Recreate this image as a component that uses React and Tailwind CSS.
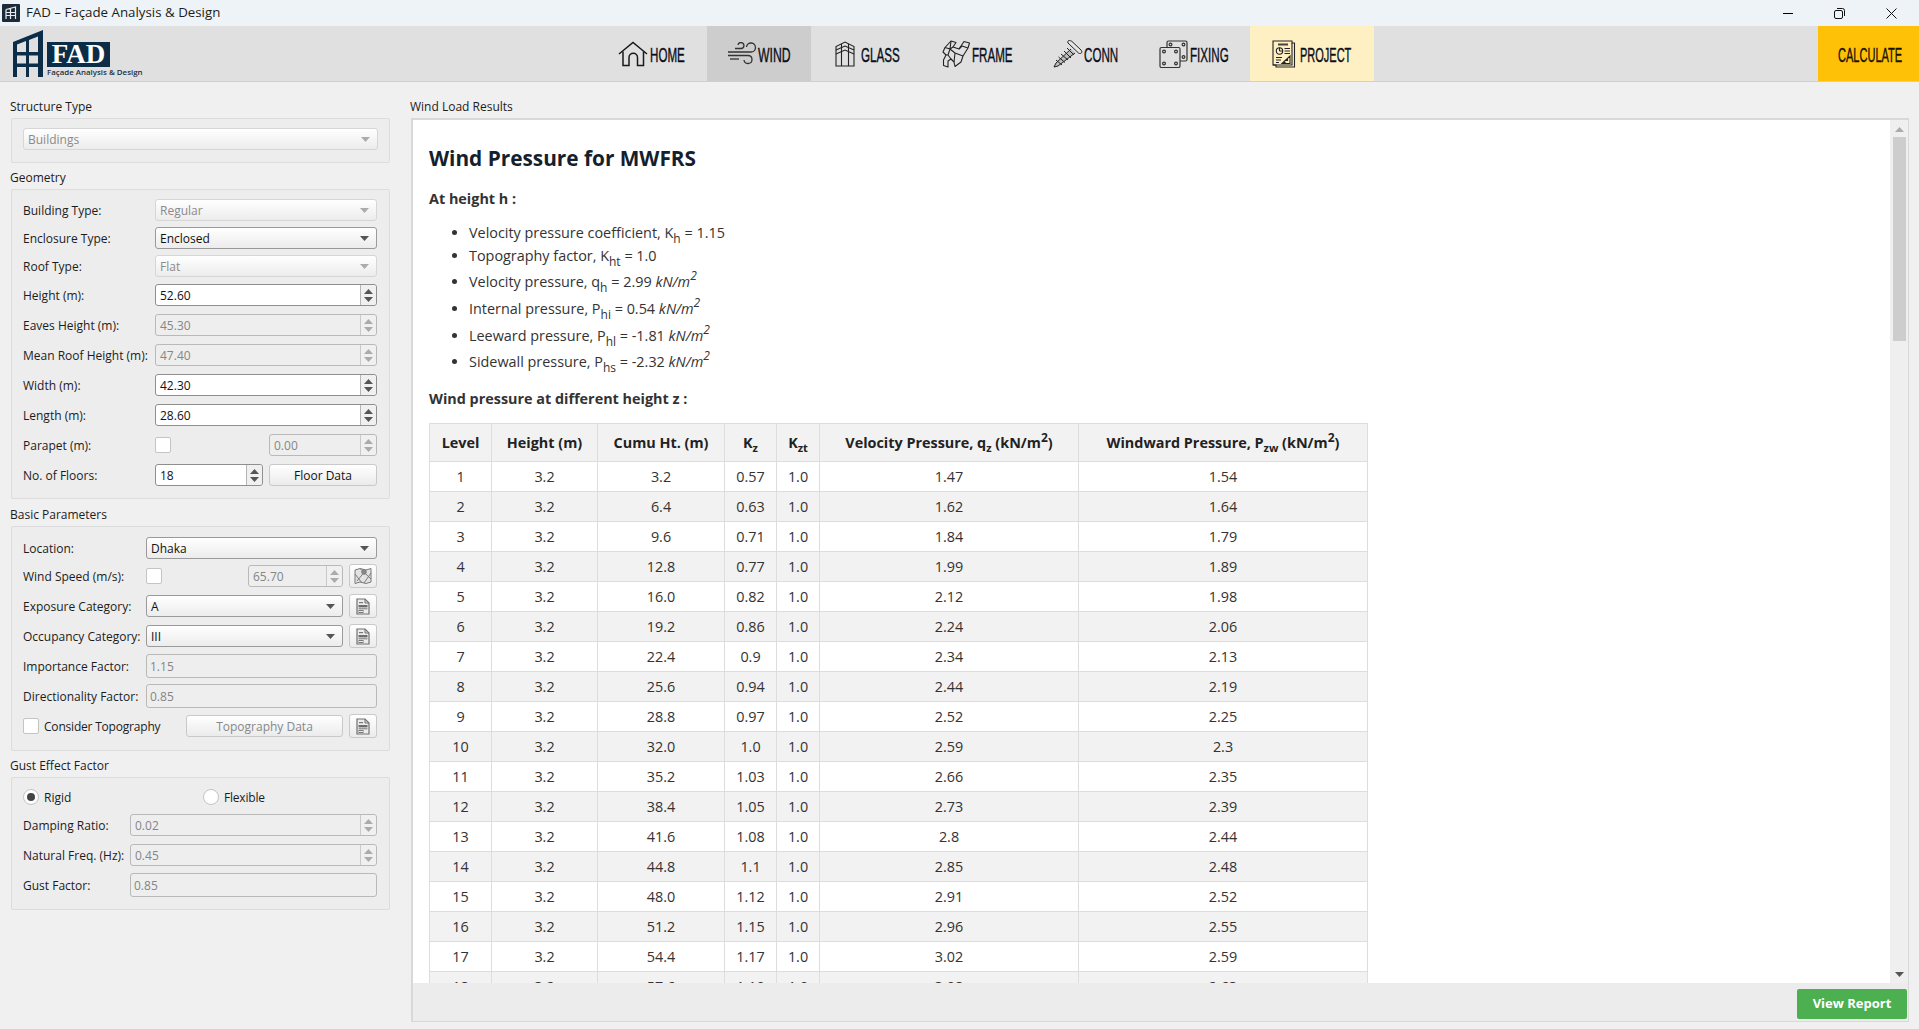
import React from 'react';

const rows = [
  [1, '3.2', '0.57', '1.47', '1.54'],
  [2, '6.4', '0.63', '1.62', '1.64'],
  [3, '9.6', '0.71', '1.84', '1.79'],
  [4, '12.8', '0.77', '1.99', '1.89'],
  [5, '16.0', '0.82', '2.12', '1.98'],
  [6, '19.2', '0.86', '2.24', '2.06'],
  [7, '22.4', '0.9', '2.34', '2.13'],
  [8, '25.6', '0.94', '2.44', '2.19'],
  [9, '28.8', '0.97', '2.52', '2.25'],
  [10, '32.0', '1.0', '2.59', '2.3'],
  [11, '35.2', '1.03', '2.66', '2.35'],
  [12, '38.4', '1.05', '2.73', '2.39'],
  [13, '41.6', '1.08', '2.8', '2.44'],
  [14, '44.8', '1.1', '2.85', '2.48'],
  [15, '48.0', '1.12', '2.91', '2.52'],
  [16, '51.2', '1.15', '2.96', '2.55'],
  [17, '54.4', '1.17', '3.02', '2.59'],
  [18, '57.6', '1.19', '3.08', '2.63'],
];

function Tri({ up, off, className = '' }) {
  return (
    <svg width="9" height="5" viewBox="0 0 9 5" className={className}>
      <path d={up ? 'M4.5 0 L9 5 H0 Z' : 'M0 0 H9 L4.5 5 Z'} fill={off ? '#ababab' : '#555555'} />
    </svg>
  );
}

function Combo({ value, off, className = '' }) {
  return (
    <div className={`h-[22px] flex items-center justify-between pl-[4px] pr-[7px] rounded-[3px] border bg-gradient-to-b from-white to-[#ececec] text-[12px] ${off ? 'border-[#d6d6d6] text-[#8a8a8a]' : 'border-[#9a9a9a] text-[#111]'} ${className}`}>
      <span className="pt-[2px]">{value}</span>
      <Tri off={off} />
    </div>
  );
}

function Spin({ value, off, className = '' }) {
  return (
    <div className={`h-[22px] flex rounded-[3px] border text-[12px] ${off ? 'border-[#b9b9b9] bg-[#eeeeee] text-[#858585]' : 'border-[#8f8f8f] bg-white text-[#111]'} ${className}`}>
      <span className="flex-1 pl-[4px] leading-[22px]">{value}</span>
      <div className={`w-[16px] flex flex-col items-center justify-center gap-[3px] border-l bg-[#f0f0f0] rounded-r-[3px] ${off ? 'border-[#c9c9c9]' : 'border-[#b5b5b5]'}`}>
        <Tri up off={off} />
        <Tri off={off} />
      </div>
    </div>
  );
}

function Field({ value, className = '' }) {
  return (
    <div className={`h-[24px] pl-[3px] leading-[24px] rounded-[3px] border border-[#b9b9b9] bg-[#eeeeee] text-[12px] text-[#858585] ${className}`}>
      {value}
    </div>
  );
}

function Check({ className = '' }) {
  return <div className={`w-[16px] h-[16px] bg-white border border-[#c4c4c4] rounded-[2px] ${className}`} />;
}

function Btn({ children, off, className = '' }) {
  return (
    <div className={`flex items-center justify-center rounded-[3px] border border-[#c9c9c9] bg-gradient-to-b from-white to-[#ebebeb] text-[12px] ${off ? 'text-[#888]' : 'text-[#111]'} ${className}`}>
      {children}
    </div>
  );
}

function DocIcon() {
  return (
    <svg width="14" height="17" viewBox="0 0 14 17" fill="none">
      <path d="M1 1 H9 L13 5 V16 H1 Z" fill="#ececec" stroke="#707070" strokeWidth="1.2" />
      <path d="M9 1 V5 H13" stroke="#707070" strokeWidth="1" />
      <rect x="3" y="4" width="4" height="1.2" fill="#777" />
      <rect x="2.5" y="7" width="9" height="2.4" fill="#6e6e6e" />
      <rect x="2.5" y="10" width="9" height="1.4" fill="#999" />
      <rect x="3" y="12.5" width="4" height="2" fill="none" stroke="#777" />
    </svg>
  );
}

function MapIcon() {
  return (
    <svg width="18" height="18" viewBox="0 0 18 18" fill="none" stroke="#7a7a7a" strokeWidth="1">
      <path d="M1 3 L6 1.5 L12 3 L17 1.5 V15 L12 16.5 L6 15 L1 16.5 Z" fill="#e2e2e2" />
      <path d="M1 7 L8 16 M6 1.5 L17 12 M12 3 L3 14 M17 6 L10 16" />
      <circle cx="10" cy="5" r="2.3" fill="#8a8a8a" />
    </svg>
  );
}

function Label({ children, className = '' }) {
  return <span className={`pt-[2px] text-[12px] text-[#1c1c1c] whitespace-nowrap ${className}`}>{children}</span>;
}

function Row({ label, w, children, className = '' }) {
  return (
    <div className={`flex items-center ${className}`}>
      <Label className={w}>{label}</Label>
      {children}
    </div>
  );
}

function Group({ title, className = '' }) {
  return <div className={`h-[16px] leading-[18px] text-[12px] text-[#1c1c1c] ${className}`}>{title}</div>;
}

function NavItem({ icon, text, w, pl, gap, textW, sc = 'scale-x-[0.58]', active, project }) {
  return (
    <div className={`flex items-center h-full ${w} ${pl} ${active ? 'bg-[#cdcdcd]' : ''} ${project ? 'bg-[#fff0c4]' : ''}`}>
      {icon}
      <span className={`pt-[3px] font-['Liberation_Sans',sans-serif] text-[20px] text-[#0b0f1a] [-webkit-text-stroke:0.4px_#0b0f1a] whitespace-nowrap origin-left ${sc} ${gap} ${textW}`}>
        {text}
      </span>
    </div>
  );
}

const HomeIcon = (
  <svg width="30" height="26" viewBox="0 0 30 26" fill="none" stroke="#1a1a1a" strokeWidth="1.5">
    <path d="M1 13 L15 1.5 L29 13" />
    <path d="M5 10.5 V24.5 H11 V16.5 A4.2 4.2 0 0 1 19.5 16.5 V24.5 H25.5 V10.5" />
  </svg>
);

const WindIcon = (
  <svg width="30" height="24" viewBox="0 0 30 24" fill="none" stroke="#333" strokeWidth="1.3">
    <path d="M8 6.5 H14 A3 3 0 1 0 11 3" />
    <path d="M1 10 H24 A4.5 4.5 0 1 0 19.5 5" />
    <path d="M1 13.5 H21 A4 4 0 1 1 17 18" />
    <path d="M3 17 H12" />
  </svg>
);

const GlassIcon = (
  <svg width="20" height="26" viewBox="0 0 20 26" fill="none" stroke="#222" strokeWidth="1.1">
    <path d="M1 25 V5.5 L10 1 L19 5.5 V25 Z" />
    <path d="M6.5 25 V3 M13.5 25 V3" />
    <path d="M1 9 L10 5 L19 9 M1 13 L10 9 L19 13" />
  </svg>
);

const FrameIcon = (
  <svg width="28" height="28" viewBox="0 0 28 28" fill="none" stroke="#222" strokeWidth="1.1" strokeLinejoin="round">
    <path d="M9 1 L14 2.5 L11 7 L17 9 L22 1.5 L27.5 3 L26 8 L21 16 L19 22 L13 26.5 L12 22 L9 19 L6 21 L6 27 L1.5 25.5 L1.5 20 L4 15 L1 12 L3 7.5 Z" />
    <path d="M3 7.5 L8 9 L11 7 M9 1 L8 9 L13 13 L21 16 M26 8 L20 6 L17 9 M13 13 L12 22 M8 9 L6 15 L9 19 M4 15 L6 15" />
  </svg>
);

const ScrewIcon = (
  <svg width="30" height="28" viewBox="0 0 30 28" fill="none" stroke="#222" strokeWidth="1">
    <path d="M15 3 C14 0 17 0 19 1.5 L28 10 C30 12.5 28 14.5 25.5 13 Z" fill="#e6e6e6" />
    <path d="M18 9 L3 23 L1 27 L5 26 L22 13" fill="#bdbdbd" />
    <path d="M14 8 L21 15 M11 11 L18 18 M8 14 L15 20 M5.5 17 L12 22.5 M3 20 L9 25" />
  </svg>
);

const FixingIcon = (
  <svg width="30" height="28" viewBox="0 0 30 28" fill="none" stroke="#333" strokeWidth="1.2">
    <rect x="8" y="1" width="20" height="20" rx="1.5" />
    <circle cx="11.5" cy="4.5" r="1.4" />
    <circle cx="24.5" cy="4.5" r="1.4" />
    <circle cx="24.5" cy="17" r="1.4" />
    <rect x="1" y="7.5" width="20" height="20" rx="1.5" fill="#e0e0e0" />
    <circle cx="5" cy="11.5" r="1.4" />
    <circle cx="17" cy="11.5" r="1.4" />
    <circle cx="5" cy="23.5" r="1.4" />
    <circle cx="17" cy="23.5" r="1.4" />
  </svg>
);

const ProjectIcon = (
  <svg width="24" height="28" viewBox="0 0 24 28" fill="none" stroke="#222" strokeWidth="1.1">
    <path d="M3 1 H20 V3 H22.5 V27 H4 V25 H1 V1 Z" fill="#fff0c4" />
    <path d="M20 3 V25 H1" />
    <rect x="6" y="3.5" width="10" height="2" fill="#444" stroke="none" />
    <circle cx="7.5" cy="11" r="3.2" />
    <path d="M7.5 11 V7.8 M7.5 11 H10.7" />
    <path d="M12.5 8.5 H18 M12.5 11 H18 M12.5 13.5 H18" />
    <path d="M4 17.5 H10 M4 20 H9 M4 22.5 H7" />
    <path d="M10 23.5 H18 V16 L10 23.5 Z M13 23.5 V20.5 H15.5 V18" />
  </svg>
);

export default function App() {
  return (
    <div className="h-screen flex flex-col overflow-hidden bg-[#f0f0f0] font-['Open_Sans',sans-serif]">
      {/* Title bar */}
      <div className="h-[26px] flex items-center justify-between bg-[#eef3f8] shrink-0">
        <div className="flex items-center pl-[2px]">
          <svg width="18" height="18" viewBox="0 0 18 18">
            <rect width="18" height="18" rx="1" fill="#1b2b3a" />
            <path d="M4 5.5 L13.5 3 V15 M4 5.5 V15 M8.5 4.5 V15 M4 8.5 H13.5 M4 11.5 H13.5" stroke="#e8edf2" strokeWidth="1.2" fill="none" />
          </svg>
          <span className="ml-[6px] text-[13.3px] text-[#1c1c1c]">FAD – Façade Analysis &amp; Design</span>
        </div>
        <div className="flex items-center pr-[22px] gap-[41px]">
          <div className="w-[10px] h-px bg-black" />
          <svg width="11" height="11" viewBox="0 0 11 11" fill="none" stroke="#111" strokeWidth="1">
            <rect x="0.5" y="2.5" width="8" height="8" rx="1.5" />
            <path d="M3 0.5 H8.5 A2 2 0 0 1 10.5 2.5 V8" />
          </svg>
          <svg width="11" height="11" viewBox="0 0 11 11" stroke="#111" strokeWidth="1">
            <path d="M0.5 0.5 L10.5 10.5 M10.5 0.5 L0.5 10.5" />
          </svg>
        </div>
      </div>

      {/* Toolbar */}
      <div className="h-[56px] flex bg-[#e0e0e0] border-b border-[#cfcfcf] shrink-0">
        <div className="w-[609px] flex items-start pl-[13px]">
          <svg width="30" height="47" viewBox="0 0 30 47" className="mt-[4px]" fill="#0c2d48">
            <path d="M0 12 L30 0 V47 H25 V6.5 L16 10 V47 H13 V11 L4 14.5 V47 H0 Z" />
            <rect x="0" y="22" width="30" height="3.5" />
            <rect x="0" y="33.5" width="30" height="3.5" />
          </svg>
          <div className="ml-[4px] mt-[16px] flex flex-col">
            <div className="w-[63px] h-[25px] flex items-center justify-center bg-[#0c2d48] text-white font-['Liberation_Serif',serif] font-bold text-[27px] leading-none">
              FAD
            </div>
            <span className="text-[7.9px] leading-[11px] font-semibold text-[#24303c] whitespace-nowrap">Façade Analysis &amp; Design</span>
          </div>
        </div>
        <NavItem icon={HomeIcon} text="HOME" w="w-[98px]" pl="pl-[9px]" gap="ml-[2px]" textW="w-[35px]" />
        <NavItem icon={WindIcon} text="WIND" w="w-[104px]" pl="pl-[20px]" gap="ml-[1px]" textW="w-[33px]" sc="scale-x-[0.61]" active />
        <NavItem icon={GlassIcon} text="GLASS" w="w-[113px]" pl="pl-[24px]" gap="ml-[6px]" textW="w-[39px]" />
        <NavItem icon={FrameIcon} text="FRAME" w="w-[111px]" pl="pl-[18px]" gap="ml-[2px]" textW="w-[40px]" />
        <NavItem icon={ScrewIcon} text="CONN" w="w-[106px]" pl="pl-[18px]" gap="ml-[1px]" textW="w-[34px]" />
        <NavItem icon={FixingIcon} text="FIXING" w="w-[109px]" pl="pl-[18px]" gap="ml-[1px]" textW="w-[39px]" />
        <NavItem icon={ProjectIcon} text="PROJECT" w="w-[124px]" pl="pl-[22px]" gap="ml-[4px]" textW="w-[52px]" sc="scale-x-[0.55]" project />
        <div className="flex-1" />
        <div className="w-[101px] flex items-center pl-[20px] bg-[#ffc107]">
          <span className="pt-[3px] font-['Liberation_Sans',sans-serif] text-[20px] text-[#1a1200] [-webkit-text-stroke:0.4px_#1a1200] whitespace-nowrap origin-left scale-x-[0.552]">CALCULATE</span>
        </div>
      </div>

      <div className="flex-1 flex min-h-0">
        {/* Left inputs */}
        <div className="w-[410px] shrink-0 pl-[11px] pt-[16px]">
          <Group title="Structure Type" className="-ml-px" />
          <div className="mt-[4px] w-[379px] h-[45px] pt-[9px] px-[11px] bg-[#ededed] border border-[#dcdcdc] rounded-[2px]">
            <Combo value="Buildings" off />
          </div>

          <Group title="Geometry" className="mt-[6px] -ml-px" />
          <div className="mt-[4px] w-[379px] pt-[9px] pb-[12px] pl-[11px] pr-[12px] bg-[#ededed] border border-[#dcdcdc] rounded-[2px]">
            <Row label="Building Type:" w="w-[132px]"><Combo value="Regular" off className="flex-1" /></Row>
            <Row label="Enclosure Type:" w="w-[132px]" className="mt-[6px]"><Combo value="Enclosed" className="flex-1" /></Row>
            <Row label="Roof Type:" w="w-[132px]" className="mt-[6px]"><Combo value="Flat" off className="flex-1" /></Row>
            <Row label="Height (m):" w="w-[132px]" className="mt-[7px]"><Spin value="52.60" className="flex-1" /></Row>
            <Row label="Eaves Height (m):" w="w-[132px]" className="mt-[8px]"><Spin value="45.30" off className="flex-1" /></Row>
            <Row label="Mean Roof Height (m):" w="w-[132px]" className="mt-[8px]"><Spin value="47.40" off className="flex-1" /></Row>
            <Row label="Width (m):" w="w-[132px]" className="mt-[8px]"><Spin value="42.30" className="flex-1" /></Row>
            <Row label="Length (m):" w="w-[132px]" className="mt-[8px]"><Spin value="28.60" className="flex-1" /></Row>
            <Row label="Parapet (m):" w="w-[132px]" className="mt-[8px]">
              <Check />
              <Spin value="0.00" off className="ml-[98px] flex-1" />
            </Row>
            <Row label="No. of Floors:" w="w-[132px]" className="mt-[8px]">
              <Spin value="18" className="w-[108px]" />
              <Btn className="ml-[6px] flex-1 h-[22px] pt-[2px]">Floor Data</Btn>
            </Row>
          </div>

          <Group title="Basic Parameters" className="mt-[7px] -ml-px" />
          <div className="mt-[4px] w-[379px] pt-[10px] pb-[12px] pl-[11px] pr-[12px] bg-[#ededed] border border-[#dcdcdc] rounded-[2px]">
            <Row label="Location:" w="w-[123px]"><Combo value="Dhaka" className="flex-1" /></Row>
            <div className="mt-[5px] flex flex-col gap-[6px]">
              <Row label="Wind Speed (m/s):" w="w-[123px]" className="h-[24px]">
                <Check />
                <Spin value="65.70" off className="ml-[86px] flex-1" />
                <Btn className="ml-[6px] w-[28px] h-[24px]"><MapIcon /></Btn>
              </Row>
              <Row label="Exposure Category:" w="w-[123px]" className="h-[24px]">
                <Combo value="A" className="flex-1" />
                <Btn className="ml-[6px] w-[28px] h-[24px]"><DocIcon /></Btn>
              </Row>
              <Row label="Occupancy Category:" w="w-[123px]" className="h-[24px]">
                <Combo value="III" className="flex-1" />
                <Btn className="ml-[6px] w-[28px] h-[24px]"><DocIcon /></Btn>
              </Row>
              <Row label="Importance Factor:" w="w-[123px]" className="h-[24px]"><Field value="1.15" className="flex-1" /></Row>
              <Row label="Directionality Factor:" w="w-[123px]" className="h-[24px]"><Field value="0.85" className="flex-1" /></Row>
              <div className="flex items-center h-[24px]">
                <Check />
                <Label className="ml-[5px] w-[142px] tracking-[-0.2px]">Consider Topography</Label>
                <Btn off className="w-[157px] h-[22px] pt-[2px]">Topography Data</Btn>
                <Btn className="ml-[6px] w-[28px] h-[24px]"><DocIcon /></Btn>
              </div>
            </div>
          </div>

          <Group title="Gust Effect Factor" className="mt-[6px] -ml-px" />
          <div className="mt-[4px] w-[379px] pt-[9px] pb-[12px] pl-[11px] pr-[12px] bg-[#ededed] border border-[#dcdcdc] rounded-[2px]">
            <div className="flex items-center h-[20px]">
              <div className="w-[16px] h-[16px] flex items-center justify-center rounded-full bg-white border border-[#c4c4c4]">
                <div className="w-[8px] h-[8px] rounded-full bg-[#444]" />
              </div>
              <Label className="ml-[5px] w-[159px]">Rigid</Label>
              <div className="w-[16px] h-[16px] rounded-full bg-white border border-[#c4c4c4]" />
              <Label className="ml-[5px] tracking-[-0.2px]">Flexible</Label>
            </div>
            <Row label="Damping Ratio:" w="w-[107px]" className="mt-[7px]"><Spin value="0.02" off className="flex-1" /></Row>
            <Row label="Natural Freq. (Hz):" w="w-[107px]" className="mt-[8px]"><Spin value="0.45" off className="flex-1" /></Row>
            <Row label="Gust Factor:" w="w-[107px]" className="mt-[7px]"><Field value="0.85" className="flex-1" /></Row>
          </div>
        </div>

        {/* Results */}
        <div className="flex-1 min-w-0 flex flex-col pt-[16px] pr-[10px] pb-[7px]">
          <Group title="Wind Load Results" />
          <div className="mt-[4px] ml-px flex-1 min-h-0 flex flex-col border-2 border-r border-b border-[#d8d8d8]">
            <div className="flex-1 min-h-0 flex">
              <div className="flex-1 min-w-0 overflow-hidden bg-white pl-[16px] pt-[24px] text-[14.4px] leading-[20px] text-[#333]">
                <h2 className="text-[20.8px] leading-[29px] font-bold text-[#14202c]">Wind Pressure for MWFRS</h2>
                <p className="mt-[16px] font-bold">At height h :</p>
                <ul className="mt-[14px] pl-[40px] list-disc">
                  <li>Velocity pressure coefficient, K<sub className="text-[12px] bottom-[-5px]">h</sub> = 1.15</li>
                  <li className="mt-[3px]">Topography factor, K<sub className="text-[12px] bottom-[-5px]">ht</sub> = 1.0</li>
                  <li className="mt-[6px]">Velocity pressure, q<sub className="text-[12px] bottom-[-5px]">h</sub> = 2.99 <i>kN/m<sup className="text-[12px] top-[-7px]">2</sup></i></li>
                  <li className="mt-[7px]">Internal pressure, P<sub className="text-[12px] bottom-[-5px]">hi</sub> = 0.54 <i>kN/m<sup className="text-[12px] top-[-7px]">2</sup></i></li>
                  <li className="mt-[7px]">Leeward pressure, P<sub className="text-[12px] bottom-[-5px]">hl</sub> = -1.81 <i>kN/m<sup className="text-[12px] top-[-7px]">2</sup></i></li>
                  <li className="mt-[6px]">Sidewall pressure, P<sub className="text-[12px] bottom-[-5px]">hs</sub> = -2.32 <i>kN/m<sup className="text-[12px] top-[-7px]">2</sup></i></li>
                </ul>
                <p className="mt-[17px] font-bold">Wind pressure at different height z :</p>
                <table className="mt-[14px] w-[938px] table-fixed border-collapse text-center">
                  <colgroup>
                    <col className="w-[62px]" />
                    <col className="w-[106px]" />
                    <col className="w-[127px]" />
                    <col className="w-[52px]" />
                    <col className="w-[43px]" />
                    <col className="w-[259px]" />
                    <col className="w-[289px]" />
                  </colgroup>
                  <thead>
                    <tr className="h-[38px] bg-[#f2f2f2] text-[#222] font-bold">
                      <th className="border border-[#dddddd]">Level</th>
                      <th className="border border-[#dddddd]">Height (m)</th>
                      <th className="border border-[#dddddd]">Cumu Ht. (m)</th>
                      <th className="border border-[#dddddd]">K<sub className="text-[11px] bottom-[-4px]">z</sub></th>
                      <th className="border border-[#dddddd]">K<sub className="text-[11px] bottom-[-4px]">zt</sub></th>
                      <th className="border border-[#dddddd]">Velocity Pressure, q<sub className="text-[11px] bottom-[-4px]">z</sub> (kN/m<sup className="text-[12px] top-[-6px]">2</sup>)</th>
                      <th className="border border-[#dddddd]">Windward Pressure, P<sub className="text-[11px] bottom-[-4px]">zw</sub> (kN/m<sup className="text-[12px] top-[-6px]">2</sup>)</th>
                    </tr>
                  </thead>
                  <tbody>
                    {rows.map((r, i) => (
                      <tr key={r[0]} className={`h-[30px] ${i % 2 ? 'bg-[#f2f2f2]' : 'bg-white'}`}>
                        <td className="border border-[#dddddd]">{r[0]}</td>
                        <td className="border border-[#dddddd]">3.2</td>
                        <td className="border border-[#dddddd]">{r[1]}</td>
                        <td className="border border-[#dddddd]">{r[2]}</td>
                        <td className="border border-[#dddddd]">1.0</td>
                        <td className="border border-[#dddddd]">{r[3]}</td>
                        <td className="border border-[#dddddd]">{r[4]}</td>
                      </tr>
                    ))}
                  </tbody>
                </table>
              </div>
              {/* Scrollbar */}
              <div className="w-[18px] shrink-0 flex flex-col items-center justify-between pt-[7px] pb-[6px] bg-[#efefef]">
                <div className="flex flex-col items-center w-full">
                  <Tri up off />
                  <div className="mt-[5px] w-[13px] h-[204px] bg-[#cdcdcd]" />
                </div>
                <Tri />
              </div>
            </div>
            <div className="h-[38px] shrink-0 flex items-center justify-end pr-[1px] pt-[4px] bg-[#ececec]">
              <div className="w-[110px] h-[30px] flex items-center justify-center rounded-[2px] bg-[#4caf50] text-white text-[13px] font-bold">
                View Report
              </div>
            </div>
          </div>
        </div>
      </div>
    </div>
  );
}
